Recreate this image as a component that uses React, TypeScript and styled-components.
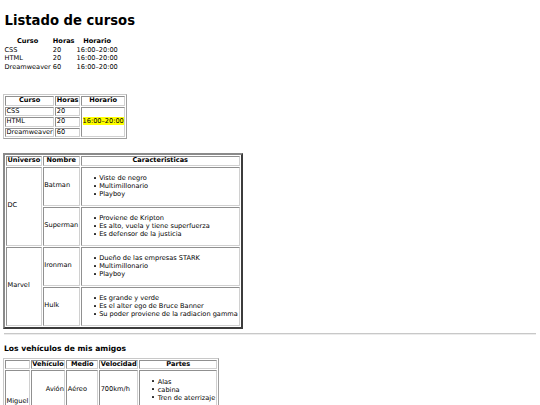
import React from "react";
import styled, { createGlobalStyle, css } from "styled-components";

const GlobalStyle = createGlobalStyle`
  html, body { background: #ffffff; }
  body {
    margin: 4px 4px 4px 3px;
    font-family: "DejaVu Sans", Verdana, sans-serif;
    font-size: 6.6px;
    line-height: 7.5px;
    color: #000000;
  }
`;

const Page = styled.main`
  display: flex;
  flex-direction: column;
  align-items: flex-start;
`;

const Title = styled.h1`
  font-size: 13.2px;
  line-height: 16px;
  font-weight: bold;
  margin: 9px 0 8px 1.5px;
`;

const SubTitle = styled.h3`
  font-size: 7.6px;
  line-height: 9px;
  font-weight: bold;
  margin: 9px 0 5px 1px;
`;

const Rule = styled.hr`
  align-self: stretch;
  margin: 4px 0 0 1px;
  border: none;
  border-top: 1px solid #c8c8c8;
  border-bottom: 1px solid #ececec;
  height: 0;
`;

type Frame = "none" | "thin" | "thick";

const Table = styled.table<{ $frame: Frame; $gap?: number }>`
  border-collapse: separate;
  border-spacing: 1px;
  margin-top: ${(p) => p.$gap ?? 0}px;
  ${(p) =>
    p.$frame === "thin" &&
    css`
      border: 1px solid;
      border-color: #c8c8c8 #a0a0a0 #a0a0a0 #c8c8c8;
    `}
  ${(p) =>
    p.$frame === "thick" &&
    css`
      border: 2px solid;
      border-color: #8a8a8a #3c3c3c #3c3c3c #8a8a8a;
    `}
`;

const cellBase = css<{ $frame: Frame; $align?: string }>`
  padding: 0 0.5px;
  text-align: ${(p) => p.$align ?? "left"};
  vertical-align: middle;
  white-space: nowrap;
  ${(p) =>
    p.$frame !== "none" &&
    css`
      border: 1px solid;
      border-color: #909090 #d0d0d0 #d0d0d0 #909090;
    `}
`;

const Head = styled.th<{ $frame: Frame; $align?: string }>`
  ${cellBase};
  font-weight: bold;
  text-align: center;
`;

const Cell = styled.td<{ $frame: Frame; $align?: string }>`
  ${cellBase};
`;

const Mark = styled.mark`
  background: #ffff00;
  color: #000000;
`;

const BulletList = styled.ul`
  margin: 6.5px 0;
  padding-left: 17px;
  padding-right: 0.5px;
  list-style: none;
`;

const Item = styled.li`
  line-height: 8px;

  &::before {
    content: "";
    display: inline-block;
    width: 2px;
    height: 2px;
    border-radius: 0.5px;
    background: #2a2a2a;
    vertical-align: 1.5px;
    margin-left: -5.5px;
    margin-right: 3.5px;
  }
`;

const courses = [
  { name: "CSS", hours: "20" },
  { name: "HTML", hours: "20" },
  { name: "Dreamweaver", hours: "60" },
];

const heroes = [
  {
    universe: "DC",
    items: [
      { name: "Batman", traits: ["Viste de negro", "Multimillonario", "Playboy"] },
      {
        name: "Superman",
        traits: ["Proviene de Kripton", "Es alto, vuela y tiene superfuerza", "Es defensor de la justicia"],
      },
    ],
  },
  {
    universe: "Marvel",
    items: [
      { name: "Ironman", traits: ["Dueño de las empresas STARK", "Multimillonario", "Playboy"] },
      {
        name: "Hulk",
        traits: ["Es grande y verde", "Es el alter ego de Bruce Banner", "Su poder proviene de la radiacion gamma"],
      },
    ],
  },
];

export default function App() {
  return (
    <>
      <GlobalStyle />
      <Page>
        <Title>Listado de cursos</Title>

        <Table $frame="none">
          <thead>
            <tr>
              <Head $frame="none">Curso</Head>
              <Head $frame="none">Horas</Head>
              <Head $frame="none">Horario</Head>
            </tr>
          </thead>
          <tbody>
            {courses.map((c) => (
              <tr key={c.name}>
                <Cell $frame="none">{c.name}</Cell>
                <Cell $frame="none">{c.hours}</Cell>
                <Cell $frame="none">16:00–20:00</Cell>
              </tr>
            ))}
          </tbody>
        </Table>

        <Table $frame="thin" $gap={22}>
          <thead>
            <tr>
              <Head $frame="thin">Curso</Head>
              <Head $frame="thin">Horas</Head>
              <Head $frame="thin">Horario</Head>
            </tr>
          </thead>
          <tbody>
            {courses.map((c, i) => (
              <tr key={c.name}>
                <Cell $frame="thin">{c.name}</Cell>
                <Cell $frame="thin">{c.hours}</Cell>
                {i === 0 && (
                  <Cell $frame="thin" rowSpan={3}>
                    <Mark>16:00–20:00</Mark>
                  </Cell>
                )}
              </tr>
            ))}
          </tbody>
        </Table>

        <Table $frame="thick" $gap={14}>
          <thead>
            <tr>
              <Head $frame="thick">Universo</Head>
              <Head $frame="thick">Nombre</Head>
              <Head $frame="thick">Caracteristicas</Head>
            </tr>
          </thead>
          <tbody>
            {heroes.flatMap((u) =>
              u.items.map((h, i) => (
                <tr key={h.name}>
                  {i === 0 && (
                    <Cell $frame="thick" rowSpan={u.items.length}>
                      {u.universe}
                    </Cell>
                  )}
                  <Cell $frame="thick">{h.name}</Cell>
                  <Cell $frame="thick">
                    <BulletList>
                      {h.traits.map((t) => (
                        <Item key={t}>{t}</Item>
                      ))}
                    </BulletList>
                  </Cell>
                </tr>
              ))
            )}
          </tbody>
        </Table>

        <Rule />
        <SubTitle>Los vehículos de mis amigos</SubTitle>

        <Table $frame="thin">
          <thead>
            <tr>
              <Head $frame="thin"></Head>
              <Head $frame="thin">Vehículo</Head>
              <Head $frame="thin">Medio</Head>
              <Head $frame="thin">Velocidad</Head>
              <Head $frame="thin">Partes</Head>
            </tr>
          </thead>
          <tbody>
            <tr>
              <Cell $frame="thin" rowSpan={2}>Miguel</Cell>
              <Cell $frame="thin" $align="right">Avión</Cell>
              <Cell $frame="thin">Aéreo</Cell>
              <Cell $frame="thin">700km/h</Cell>
              <Cell $frame="thin">
                <BulletList>
                  <Item>Alas</Item>
                  <Item>cabina</Item>
                  <Item>Tren de aterrizaje</Item>
                </BulletList>
              </Cell>
            </tr>
            <tr>
              <Cell $frame="thin" $align="right">Coche</Cell>
              <Cell $frame="thin">Terrestre</Cell>
              <Cell $frame="thin">120km/h</Cell>
              <Cell $frame="thin">
                <BulletList>
                  <Item>Ruedas</Item>
                </BulletList>
              </Cell>
            </tr>
          </tbody>
        </Table>
      </Page>
    </>
  );
}
